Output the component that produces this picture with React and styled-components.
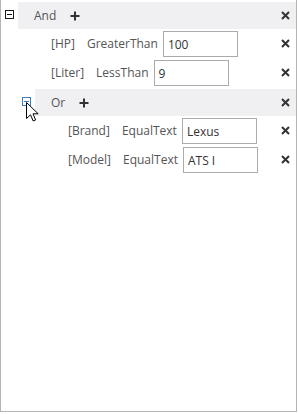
import React from "react";
import styled, { createGlobalStyle } from "styled-components";

const Global = createGlobalStyle`
  html, body { margin: 0; padding: 0; background: #fff; }
  body { font-family: "Open Sans", "Noto Sans", sans-serif; }
`;

const Panel = styled.div`
  position: relative;
  box-sizing: border-box;
  width: 297px;
  height: 412px;
  border: 1px solid #b4b4b4;
  border-top: none;
  background: #fff;
  font-size: 12px;
  color: #555;
`;

const Row = styled.div`
  display: flex;
  align-items: center;
  height: 29px;
  padding-left: ${(p) => p.$indent}px;
  box-sizing: border-box;
`;

const ToggleSlot = styled.div`
  width: 17px;
  height: 29px;
  flex: none;
  display: flex;
  align-items: center;
  padding-left: 4px;
  box-sizing: border-box;
`;

const ToggleBox = styled.div`
  position: relative;
  box-sizing: border-box;
  width: 9px;
  height: 9px;
  border: 1px solid ${(p) => (p.$hover ? "#3b7fc4" : "#1a1a1a")};
  background: #fff;
  &::after {
    content: "";
    position: absolute;
    left: 1px;
    top: 3px;
    width: 5px;
    height: 1px;
    background: ${(p) => (p.$hover ? "#3b7fc4" : "#1a1a1a")};
  }
`;

const HeaderBar = styled.div`
  flex: 1;
  align-self: flex-end;
  height: 27px;
  display: flex;
  align-items: center;
  background: #f0f0f3;
  padding-left: 16px;
  padding-right: 6px;
`;

const GroupLabel = styled.span`
  margin-right: 14px;
`;

const Spacer = styled.div`
  flex: 1;
`;

const Field = styled.span`
  margin-right: 12px;
  white-space: nowrap;
`;

const Operator = styled.span`
  margin-right: 5px;
  white-space: nowrap;
`;

const ValueBox = styled.div`
  box-sizing: border-box;
  width: 75px;
  height: 26px;
  border: 1px solid #ababab;
  padding-left: 4px;
  display: flex;
  align-items: center;
  color: #333;
  align-self: flex-start;
  margin-top: 2px;
  background: #fff;
`;

const RemoveWrap = styled.div`
  display: flex;
  align-items: center;
  margin-right: ${(p) => p.$mr || 0}px;
`;

const Cursor = styled.svg`
  position: absolute;
  left: 25px;
  top: 102px;
  pointer-events: none;
`;

const PlusIcon = () => (
  <svg width="10" height="10" viewBox="0 0 10 10">
    <path d="M5 0.5V9.5M0.5 5H9.5" stroke="#333" strokeWidth="2" />
  </svg>
);

const CloseIcon = () => (
  <svg width="9" height="9" viewBox="0 0 9 9">
    <path d="M1 1L8 8M8 1L1 8" stroke="#333" strokeWidth="2" />
  </svg>
);

const Group = ({ level, label, hover }) => (
  <Row $indent={level * 17}>
    <ToggleSlot>
      <ToggleBox $hover={hover} />
    </ToggleSlot>
    <HeaderBar>
      <GroupLabel>{label}</GroupLabel>
      <PlusIcon />
      <Spacer />
      <CloseIcon />
    </HeaderBar>
  </Row>
);

const Condition = ({ level, field, op, value }) => (
  <Row $indent={level * 17 + 33}>
    <Field>{field}</Field>
    <Operator>{op}</Operator>
    <ValueBox>{value}</ValueBox>
    <Spacer />
    <RemoveWrap $mr={6}>
      <CloseIcon />
    </RemoveWrap>
  </Row>
);

export default function App() {
  return (
    <>
      <Global />
      <Panel>
        <Group level={0} label="And" />
        <Condition level={1} field="[HP]" op="GreaterThan" value="100" />
        <Condition level={1} field="[Liter]" op="LessThan" value="9" />
        <Group level={1} label="Or" hover />
        <Condition level={2} field="[Brand]" op="EqualText" value="Lexus" />
        <Condition level={2} field="[Model]" op="EqualText" value="ATS I" />
        <Cursor width="13" height="20" viewBox="0 0 13 20">
          <path
            d="M0.5 0.5V16.5L4.5 12.8L7.2 19L9.6 18L7 11.8H12.2Z"
            fill="#fff"
            stroke="#000"
            strokeWidth="1"
            strokeLinejoin="miter"
          />
        </Cursor>
      </Panel>
    </>
  );
}
